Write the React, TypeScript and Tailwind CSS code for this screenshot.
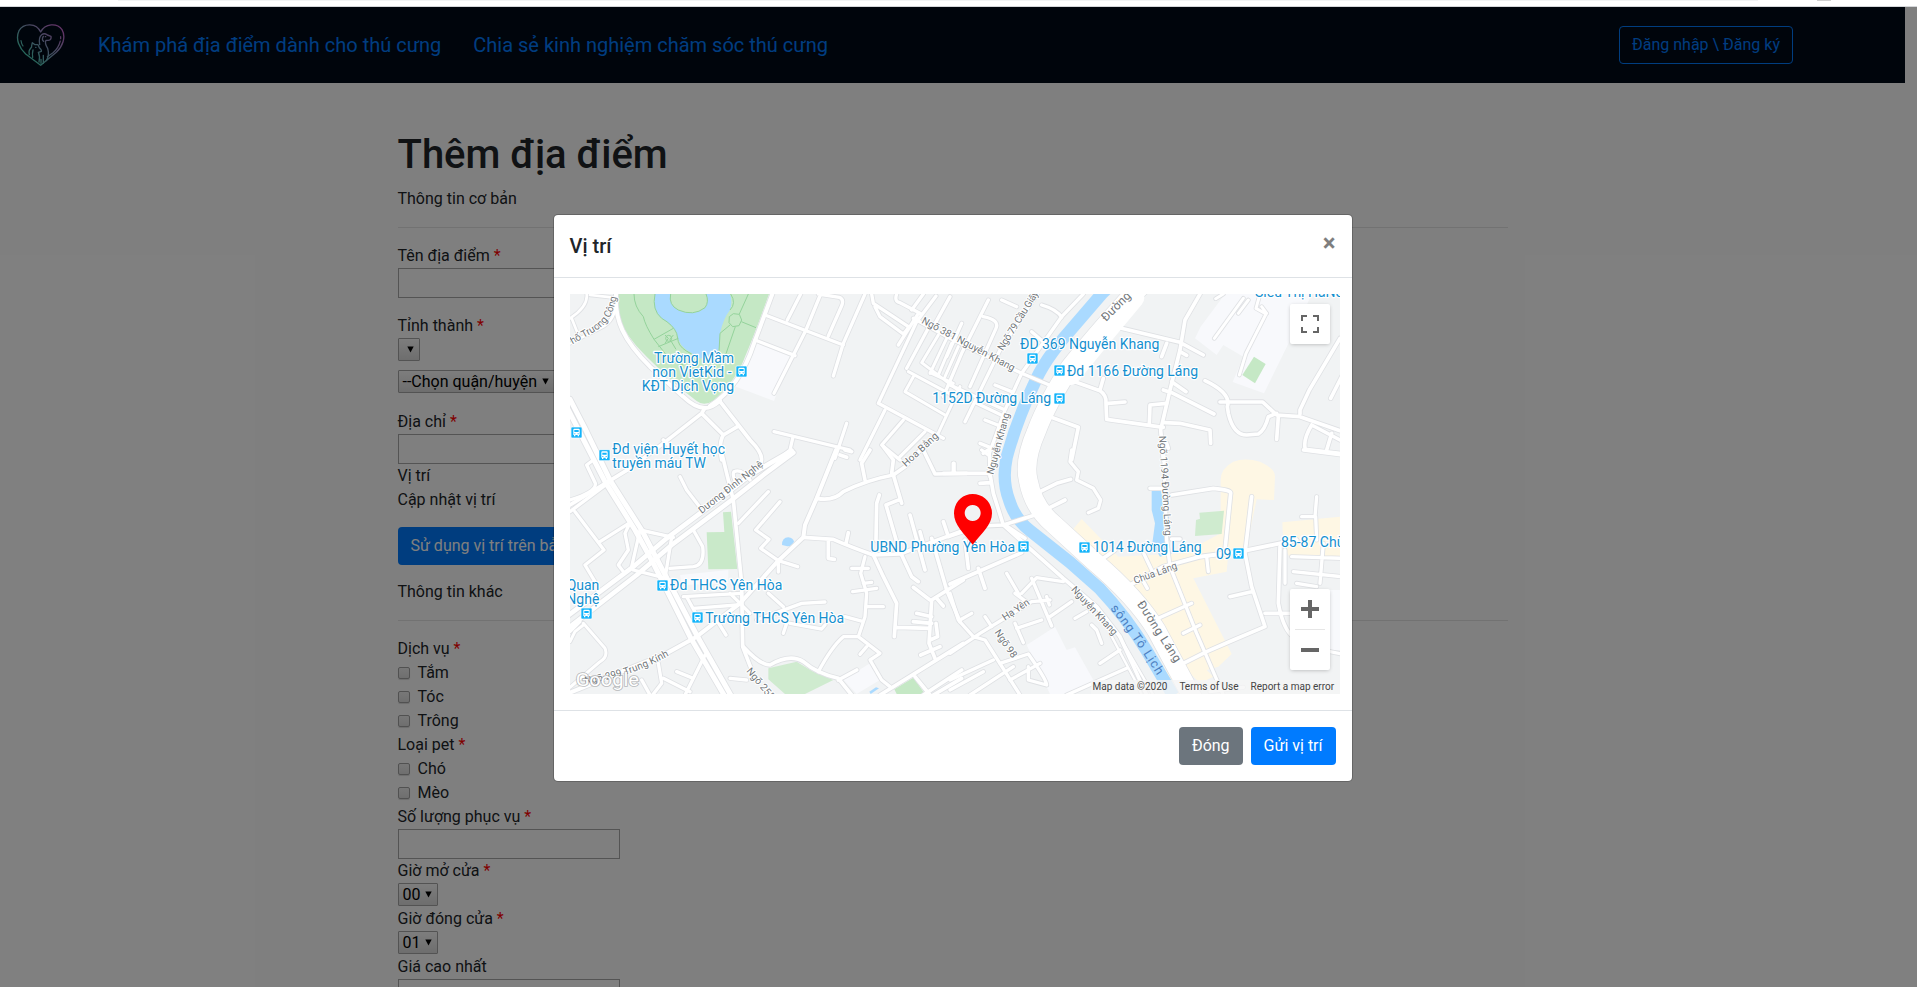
import React from "react";

type Tile = { x: number; y: number };
const NW: Tile = { x: -60, y: -252 };
const NE: Tile = { x: 1140, y: -252 };
const SW: Tile = { x: -60, y: 468 };
const SE: Tile = { x: 1140, y: 468 };

const at = (t: Tile) => `translate(${t.x} ${t.y})`;

const AREAS: { tile: Tile; fill: string; d: string }[] = [
  { tile: NW, fill: "#f8f9fc", d: "M610 395 L722 440 L672 573 L545 525Z" },
  { tile: NW, fill: "#c5e8c5", d: "M205 252 L657 252 Q615 370 585 440 Q560 510 490 572 Q462 590 440 573 Q370 520 290 440 Q225 380 202 310Z" },
  { tile: NW, fill: "#aadaff", d: "M315 252 Q305 300 335 325 Q370 345 380 370 Q385 410 425 430 L445 445 L500 445 Q512 400 510 370 Q520 325 540 300 Q548 275 540 252Z" },
  { tile: NW, fill: "#c5e8c5", d: "M362 252 Q355 285 385 300 Q430 320 465 293 Q478 275 468 252Z" },
  { tile: NE, fill: "#f8f9fc", d: "M825 252 L1085 252 L1050 330 L942 550 L848 516 L880 440 L820 405 L800 435 L735 385 L752 350Z" },
  { tile: NE, fill: "#c5e8c5", d: "M912 440 L947 462 L915 520 L877 495Z" },
  { tile: SW, fill: "#c9e9c9", d: "M519 187 L543 185 L562 357 L475 358 L470 247 L523 246Z" },
  { tile: SW, fill: "#f8f9fc", d: "M390 375 L535 360 L535 400 L395 405Z" },
  { tile: SW, fill: "#f8f9fc", d: "M880 690 L960 640 L990 690 L920 732Z" },
  { tile: SW, fill: "#cfebcf", d: "M655 655 L740 635 L790 665 L850 690 L765 732 L705 732 L655 688Z" },
  { tile: SW, fill: "#c5e8c5", d: "M1033 718 L1090 683 L1125 732 L1040 732Z" },
  { tile: SW, fill: "#aadaff", d: "M696 285 Q696 262 715 262 Q730 264 732 275 Q725 290 712 289Z" },
  { tile: SW, fill: "#aadaff", d: "M958 725 L978 712 L987 715 L962 732Z" },
  { tile: SE, fill: "#fef7e4", d: "M812 90 Q812 55 850 35 Q885 22 930 35 Q975 55 975 80 L972 150 L920 148 L890 290 L835 310 L830 365 L730 385 L845 612 L805 650 L770 660 L790 680 L750 700 L690 640 L620 520 L540 420 L370 237 L395 207 L505 320 L700 310 L812 250Z" },
  { tile: SE, fill: "#fef7e4", d: "M997 217 L1170 200 L1170 330 L1020 325 L1000 285Z" },
  { tile: SE, fill: "#fef7e4", d: "M325 285 L480 430 L560 540 L700 732 L660 732 L470 450Z" },
  { tile: SE, fill: "#aadaff", d: "M605 120 L633 118 L640 170 L657 200 L650 285 L665 310 L630 320 L607 280 L615 220 L605 180Z" },
  { tile: SE, fill: "#cfebcf", d: "M748 188 L822 182 L815 252 L735 258 L738 210 L750 206Z" },
  { tile: SE, fill: "#f8f9fc", d: "M230 585 L315 530 L350 600 L375 592 L430 690 L370 732 L300 732Z" },
  { tile: SE, fill: "#f8f9fc", d: "M1120 420 L1170 420 L1170 600 L1120 600Z" },
];

const PARK_PATHS =
  "M252 252 Q252 290 280 320 Q285 345 312 388 L345 430 Q370 460 400 465 M312 388 L370 355 M325 410 L385 385 M345 375 L355 385 L345 400 M370 375 L360 388 L378 418 M355 385 m-8 0 a9 9 0 1 0 18 0 a9 9 0 1 0 -18 0 M315 252 Q305 300 335 325 Q370 345 380 370 L385 395 Q390 415 425 432 M362 252 Q355 285 385 300 Q430 320 465 293 Q478 275 468 252 M542 252 Q560 280 540 300 M595 252 L568 312 M538 320 L550 311 L568 313 L575 330 L567 347 L548 350 L537 338Z M574 335 L618 353 M540 345 L510 370 L507 425 M556 350 L525 440";

const ROADS: { tile: Tile; w?: number; d: string }[] = [
  { tile: NW, w: 8, d: "M60 325 Q115 290 110 252 M65 325 L85 375 M120 255 L185 262 M60 400 L150 355 Q205 330 198 252" },
  { tile: NW, w: 12, d: "M198 252 C193 330 220 390 300 470 L400 560 Q435 594 465 594 Q485 594 510 572 M480 588 Q570 530 612 400 L667 252" },
  { tile: NW, w: 11, d: "M465 594 L455 610 L340 700 L240 775 L60 885 M455 610 L520 675 L562 650 M520 675 Q505 700 515 750 M508 572 L600 690 Q645 735 632 760 M340 690 L365 715" },
  { tile: NW, w: 10, d: "M645 315 L880 405 M752 252 L712 330 M812 252 L768 360 L672 550 M805 252 L868 262 Q882 268 876 285 L835 378 M945 252 L880 400 L850 498 M615 390 L735 437" },
  { tile: NW, w: 10, d: "M965 252 L970 280 L1075 350 M975 290 L990 320 L1060 372 M1040 252 Q1032 275 1050 278 L1110 310 M1078 350 L1060 372 M1120 252 L1085 300 M1158 258 L1100 335 L985 580 L1180 685 M1200 260 L1150 350 M1140 345 L1070 475 M1105 310 L1045 405" },
  { tile: NW, w: 9, d: "M1165 375 L1115 458 L1230 545 M1190 385 L1140 490 M1205 400 L1165 495 M1225 410 L1185 500 M1075 485 L1215 560 M1090 500 L1065 545 L1185 615 M1230 530 L1160 680 M1140 488 L1210 520" },
  { tile: NW, w: 10, d: "M1005 600 L930 750 M672 665 L900 720 M890 640 L855 745 M728 685 L720 720 L690 745 M1060 630 L995 705 L1050 750 M1125 665 L1050 740" },

  { tile: NE, w: 10, d: "M400 252 L335 320 L215 490 L165 600 L118 730 L120 800 M-110 325 L0 385 L215 490 L310 530 M155 270 L200 290 M275 285 Q320 298 335 322 M245 365 L280 395 M100 320 Q150 330 138 355 L60 530 M115 270 L35 430 L-20 560 M262 252 L150 420 L45 635 M35 340 L-10 440 M0 525 L165 600 M80 580 L165 620 M135 525 L185 545 M105 630 L155 650 M90 700 L120 712 M95 720 L115 735" },
  { tile: NE, w: 11, d: "M495 350 L690 397 L760 435 M750 252 L705 330 L690 420 L660 540 L632 660 L640 750 M650 400 L635 440 M690 425 L710 436 M665 515 L708 545 M640 540 L665 548 L792 612" },
  { tile: NE, w: 11, d: "M460 505 L450 540 M345 505 L450 542 Q470 555 468 580 L470 628 L640 652 M475 580 L525 576 M598 640 L600 585 L650 580 M645 638 L690 640 L780 660 L782 700 M300 620 L385 652 L365 750 M650 700 L655 715" },
  { tile: NE, w: 9, d: "M880 265 L793 385 M820 252 L797 266 M895 270 L865 310 M930 252 L918 295 L948 312 L888 430 L868 495 M935 290 L950 310" },
  { tile: NE, w: 11, d: "M765 512 Q845 550 832 590 L835 610 Q850 675 890 675 L925 672 Q945 660 955 620 L980 610 M810 576 L938 576 L980 615 L1050 620 L1170 662 M985 620 L980 688 M1050 612 L1050 600 L1078 540 L1170 385 M1175 500 L1142 565 M1085 645 Q1058 690 1066 718 L1170 730 M1085 645 L1170 690 M1145 670 L1130 720" },

  { tile: SW, w: 15, d: "M60 -152 L105 -65 L180 90 L275 240 L330 345 L440 555 L545 740 M50 -130 L165 95 L255 240 L310 340 L420 560 L525 740" },
  { tile: SW, w: 14, d: "M50 500 L250 350 L350 265 L530 130 L600 75 L660 40 L725 2 M50 538 L260 375 L365 285 L545 150 L640 75 L730 8" },
  { tile: SW, w: 10, d: "M60 150 Q140 125 136 100 L110 45 L130 30 M60 185 L180 95 M75 185 L162 300 L105 345 L135 395 M150 275 L240 218 M240 218 L225 250 L235 300 L205 345 L218 362 M270 240 L370 262 M365 262 L345 385 M250 360 L350 385 M270 240 L245 350" },
  { tile: SW, w: 10, d: "M430 240 L458 290 Q465 345 430 350 L360 355 M390 80 L410 120 L450 172 M600 90 Q575 55 552 65 Q545 75 560 100" },
  { tile: SW, w: 11, d: "M512 -5 L530 70 L550 150 L575 400 L578 590 L605 660" },
  { tile: SW, w: 10, d: "M655 125 L565 220 M690 155 L617 240 L657 268 L632 295 L685 332 L743 350 M685 335 L685 366 M655 430 L700 470 M620 510 L755 460 L825 456 M720 520 L815 537 L825 525 M710 520 L700 550" },
  { tile: SW, w: 12, d: "M858 0 L800 145 L765 225 L760 262 L685 332 L570 460 L440 560 L350 610 L60 728" },
  { tile: SW, w: 11, d: "M760 262 L850 268 Q900 290 970 315 L1050 312 L1230 245 M895 248 L888 280 M835 275 L835 325 L853 328 M800 145 Q850 155 880 125 Q950 90 1030 75 L1065 50 L1130 -20 M945 90 L935 40 L960 0 M1000 -10 L1030 30 L1025 70" },
  { tile: SW, w: 11, d: "M1120 0 L1155 72 L1250 70 M1212 40 V70 M1030 75 L1055 160 M1050 148 L1008 165 L1040 275 L1048 310 M988 135 L980 160 L978 270 M1080 195 L1125 360 M1110 245 L1125 300 M1180 215 L1195 260 M1055 315 L1085 380 L1105 395 M1145 265 L1190 420 L1230 515 M870 15 L890 22 M885 0 L905 5" },
  { tile: SW, w: 11, d: "M970 315 L1000 380 L1040 460 L1033 560 M1040 532 L1140 535 M1240 390 L1145 450 L1137 580 L1155 625 M1090 412 L1140 450 M1100 490 L1145 500 M1090 515 L1145 520 M1158 520 L1163 560 L1140 570 M1112 615 L1170 590 M1160 445 L1180 468" },
  { tile: SW, w: 10, d: "M945 320 L932 370 L950 430 L945 500 L925 560 M905 355 L955 355 M908 425 L980 415 M940 400 L965 397 M950 470 L1000 470 M885 500 L940 515 M925 560 L880 560 Q845 590 805 665 M925 560 L990 610 L960 630 L995 690 L1020 710 M930 613 L950 590" },
  { tile: SW, w: 11, d: "M580 590 Q630 645 660 645 Q720 610 760 635 Q800 670 865 685 L905 735 M865 690 L920 660 M1240 580 L990 735 M1095 680 L1140 735 M1235 660 L1120 735 M1235 685 L1150 735" },
  { tile: SW, w: 10, d: "M400 440 L575 430 M430 475 L560 465 M410 440 L445 505 M500 510 L528 555 M540 430 L600 490 M465 615 L405 735 M340 685 L420 725 M380 665 L430 685 M325 640 L335 700 L310 732 M275 690 L300 735 M540 685 L590 690" },
  { tile: SW, w: 9, d: "M100 520 L165 595 Q175 620 150 635 L60 712 M60 575 L75 545 L100 525 M60 545 L90 515" },

  { tile: SE, w: 11, d: "M118 60 L130 130 L160 225 L340 385 L440 470 L510 560 L590 735 M225 265 L165 225 M100 10 L115 0 M90 100 L120 98" },
  { tile: SE, w: 7, d: "M480 550 L560 700 L575 735 M500 545 L610 735" },
  { tile: SE, w: 11, d: "M270 125 L320 100 L362 88 M345 150 L255 195 L160 225 L90 228 L0 258 M-20 70 L115 70 M10 40 V70 M0 402 L215 308 M45 270 L55 355 M85 355 L105 415" },
  { tile: SE, w: 10, d: "M170 370 L208 435 M215 430 L260 383 L340 395 M245 385 L305 528 M0 610 L90 550 L245 455 L300 450 M0 430 L25 510 L70 560 L105 570 L210 735 M195 430 L235 460 M65 490 L30 510 M105 500 L125 530 M195 520 L220 578 M200 535 L275 510 M300 500 L365 455 M290 440 L298 465" },
  { tile: SE, w: 10, d: "M150 640 L235 612 Q290 690 290 705 L235 690 L235 650 M60 735 L190 650 M0 690 L130 630 M0 720 L100 665 M180 690 L270 640 M350 735 L530 655 M450 640 L510 600 M455 580 L440 540 L425 525 M375 505 L410 485" },
  { tile: SE, w: 10, d: "M365 0 L360 35 L385 65 L380 90 L430 115 L452 150 L445 175 L415 188" },
  { tile: SE, w: 10, d: "M640 -30 L650 270 L660 350 L740 550 L820 735" },
  { tile: SE, w: 11, d: "M665 135 L790 115 Q845 120 842 130 L835 200 L825 300 M600 115 L650 115 M665 267 L690 267 M905 140 L885 310 L905 410 L945 530 L850 570 L770 605 L700 640 M840 440 L905 425 M945 490 L1020 490 M990 290 L985 460 Q1000 540 1030 560 M460 325 L495 300" },
  { tile: SE, w: 12, d: "M540 405 L640 350 L750 320 L880 303 L990 280 L1040 270" },
  { tile: SE, w: 10, d: "M770 320 L775 365 M582 312 L605 360 M575 385 L592 415 M625 505 L725 460 M700 550 L750 525 M1100 140 L1095 200 M1055 200 L1097 200 L1100 270 M1025 320 L1175 325 M1030 365 L1175 380 M1120 280 L1110 400 M1005 300 L1005 400 M1040 400 L1100 410 M1140 605 L1175 612 M1060 0 L1175 15 M780 725 L880 712" },
];

const STREETS: { tile: Tile; x: number; y: number; r: number; len?: number; size?: number; t: string }[] = [
  { tile: NW, x: 1113, y: 338, r: 28, len: 312, t: "Ngõ 381 Nguyễn Khang" },
  { tile: NE, x: 158, y: 424, r: -58, len: 205, t: "Ngõ 79 Cầu Giấy" },
  { tile: NE, x: 468, y: 336, r: -45, len: 108, size: 36, t: "Đường" },
  { tile: SW, x: 1068, y: 52, r: -43, len: 135, t: "Hoa Bằng" },
  { tile: SW, x: 455, y: 192, r: -38, len: 236, t: "Dương Đình Nghệ" },
  { tile: SW, x: 588, y: 664, r: 50, t: "Ngõ 255 Mạc" },
  { tile: SE, x: 130, y: 75, r: -75, len: 190, t: "Nguyễn Khang" },
  { tile: SE, x: 627, y: -42, r: 86.5, len: 300, t: "Ngõ 1194 Đường Láng" },
  { tile: SE, x: 555, y: 402, r: -20, len: 137, t: "Chùa Láng" },
  { tile: SE, x: 362, y: 420, r: 47, len: 188, t: "Nguyễn Khang" },
  { tile: SE, x: 560, y: 462, r: 57, len: 212, size: 36, t: "Đường Láng" },
  { tile: SE, x: 165, y: 513, r: -34, len: 92, t: "Hạ Yên" },
  { tile: SE, x: 133, y: 547, r: 56, len: 95, t: "Ngõ 98" },
];

const PLACES: { tile: Tile; x: number; y: number; len?: number; end?: boolean; t: string }[] = [
  { tile: NW, x: 552, y: 460, len: 240, end: true, t: "Trường Mầm" },
  { tile: NW, x: 545, y: 501, len: 238, end: true, t: "non VietKid -" },
  { tile: NW, x: 552, y: 543, len: 277, end: true, t: "KĐT Dịch Vọng" },
  { tile: NW, x: 187, y: 732, len: 338, t: "Đd viện Huyết học" },
  { tile: NW, x: 187, y: 774, len: 281, t: "truyền máu TW" },
  { tile: NE, x: 210, y: 417, len: 418, t: "ĐD 369 Nguyễn Khang" },
  { tile: NE, x: 351, y: 499, len: 393, t: "Đd 1166 Đường Láng" },
  { tile: NE, x: 303, y: 580, len: 356, end: true, t: "1152D Đường Láng" },
  { tile: NE, x: 915, y: 262, t: "Siêu Thị HaNoi" },
  { tile: SW, x: 360, y: 420, len: 337, t: "Đd THCS Yên Hòa" },
  { tile: SW, x: 466, y: 519, len: 416, t: "Trường THCS Yên Hòa" },
  { tile: SW, x: 148, y: 420, end: true, t: "Quan" },
  { tile: SW, x: 148, y: 462, end: true, t: "Nghệ" },
  { tile: SW, x: 961, y: 306, len: 434, t: "UBND Phường Yên Hòa" },
  { tile: SE, x: 428, y: 306, len: 327, t: "1014 Đường Láng" },
  { tile: SE, x: 798, y: 326, len: 46, t: "09" },
  { tile: SE, x: 993, y: 291, t: "85-87 Chùa Láng" },
];

const STOPS: { tile: Tile; x: number; y: number }[] = [
  { tile: NW, x: 558, y: 468 },
  { tile: NW, x: 63, y: 651 },
  { tile: NW, x: 147, y: 719 },
  { tile: NE, x: 231, y: 429 },
  { tile: NE, x: 312, y: 465 },
  { tile: NE, x: 312, y: 549 },
  { tile: SW, x: 321, y: 390 },
  { tile: SW, x: 426, y: 486 },
  { tile: SW, x: 93, y: 474 },
  { tile: SE, x: 204, y: 273 },
  { tile: SE, x: 387, y: 276 },
  { tile: SE, x: 849, y: 294 },
];

function BusStop({ x, y }: { x: number; y: number }) {
  return (
    <g transform={`translate(${x} ${y})`}>
      <rect width="33" height="33" rx="3" fill="#14b4fa" stroke="#fff" strokeWidth="2" />
      <path d="M7 8 Q7 5 10 5 H23 Q26 5 26 8 V24 H24 V28 H20 V24 H13 V28 H9 V24 H7Z" fill="#fff" />
      <path d="M10 9 H23 V15 H10Z M10 19 H13 V22 H10Z M20 19 H23 V22 H20Z" fill="#14b4fa" />
    </g>
  );
}

const RIVER =
  "M1615 -20 L1595 0 L1500 110 Q1420 200 1390 275 Q1340 380 1310 490 Q1295 560 1318 620 Q1335 675 1380 710 L1500 805 L1590 885 Q1670 970 1730 1070 L1810 1205";
const AVENUE =
  "M1730 -40 L1690 0 Q1580 120 1500 220 Q1430 330 1400 410 Q1360 500 1375 560 Q1390 640 1450 690 L1570 800 Q1700 910 1760 1010 L1870 1215";

function MapCanvas() {
  return (
    <svg className="block h-full w-full font-[Roboto,sans-serif]" viewBox="0 0 2310 1200">
      <rect width="2310" height="1200" fill="#f1f3f4" />
      {AREAS.map((a, i) => (
        <path key={i} d={a.d} fill={a.fill} transform={at(a.tile)} />
      ))}
      <path d={PARK_PATHS} transform={at(NW)} fill="none" stroke="#94d39b" strokeWidth="3" />
      <path d={RIVER} fill="none" stroke="#aadaff" strokeWidth="37" />
      <g fill="none" strokeLinecap="round" strokeLinejoin="round" stroke="#dfe1e4">
        {ROADS.map((r, i) => (
          <path key={i} d={r.d} transform={at(r.tile)} strokeWidth={(r.w ?? 10) + 5} />
        ))}
        <path d={AVENUE} strokeWidth="60" />
      </g>
      <g fill="none" strokeLinecap="round" strokeLinejoin="round" stroke="#fff">
        {ROADS.map((r, i) => (
          <path key={i} d={r.d} transform={at(r.tile)} strokeWidth={r.w ?? 10} />
        ))}
        <path d={AVENUE} strokeWidth="56" />
        <path d="M1690 10 L1590 130 L1500 240" strokeWidth="66" />
      </g>
      <g fill="#71767a" stroke="#fff" strokeWidth="6" strokeLinejoin="round" paintOrder="stroke" fontSize="30">
        <path id="truongCong" d="M-8 160 L75 112 Q134 80 141 -8" fill="none" stroke="none" />
        <text>
          <textPath href="#truongCong" textLength="222">Phố Trương Công</textPath>
        </text>
        <path id="trungKinh" d="M45 1170 Q185 1150 306 1080" fill="none" stroke="none" />
        <text>
          <textPath href="#trungKinh" textLength="268">Ngõ 299 Trung Kính</textPath>
        </text>
        {STREETS.map((s, i) => (
          <g key={i} transform={at(s.tile)}>
            <text transform={`translate(${s.x} ${s.y}) rotate(${s.r})`} fontSize={s.size ?? 30} textLength={s.len}>
              {s.t}
            </text>
          </g>
        ))}
      </g>
      <path id="toLich" d="M1620 944 Q1690 1030 1765 1150" fill="none" />
      <text fill="#4c80c2" fontSize="38">
        <textPath href="#toLich" textLength="246">sông Tô Lịch</textPath>
      </text>
      <g fill="#1590cf" stroke="#fff" strokeWidth="7" strokeLinejoin="round" paintOrder="stroke" fontSize="42">
        {PLACES.map((p, i) => (
          <text key={i} transform={at(p.tile)} x={p.x} y={p.y} textLength={p.len} textAnchor={p.end ? "end" : "start"}>
            {p.t}
          </text>
        ))}
      </g>
      {STOPS.map((s, i) => (
        <g key={i} transform={at(s.tile)}>
          <BusStop x={s.x} y={s.y} />
        </g>
      ))}
      <path
        transform={at(SE)}
        fill="#f00"
        fillRule="evenodd"
        d="M68 132 C100 132 126 157 126 190 C126 225 95 250 68 284 C41 250 12 225 12 190 C12 157 37 132 68 132Z M68 165 a24 24 0 1 0 0.1 0Z"
      />
      <text x="17" y="1176" fontSize="56" fill="#fff" stroke="#8d9093" strokeOpacity="0.6" strokeWidth="5" paintOrder="stroke" textLength="190" lengthAdjust="spacingAndGlyphs">
        Google
      </text>
    </svg>
  );
}

function MapView() {
  return (
    <div className="relative h-[400px] w-[770px] overflow-hidden">
      <MapCanvas />
      <div className="absolute right-0 bottom-0 flex h-[14px] w-[249px] items-center gap-3 bg-[#f5f5f5]/80 pl-[2px] text-[10px] leading-[14px] whitespace-nowrap text-[#444]">
        <span>Map data ©2020</span>
        <span>Terms of Use</span>
        <span>Report a map error</span>
      </div>
      <div className="absolute top-[10px] right-[10px] flex h-10 w-10 items-center justify-center rounded-[2px] bg-white shadow-[0_1px_4px_-1px_rgba(0,0,0,0.3)]">
        <svg width="18" height="18" viewBox="0 0 18 18" fill="#666">
          <path d="M0 0v6h2V2h4V0H0zm16 0h-4v2h4v4h2V0h-2zm0 16h-4v2h6v-6h-2v4zM2 12H0v6h6v-2H2v-4z" />
        </svg>
      </div>
      <div className="absolute top-[295px] right-[10px] flex h-[81px] w-10 flex-col items-center rounded-[2px] bg-white shadow-[0_1px_4px_-1px_rgba(0,0,0,0.3)]">
        <div className="flex h-10 items-center">
          <svg width="18" height="18" viewBox="0 0 18 18" fill="#666">
            <path d="M18 7h-7V0H7v7H0v4h7v7h4v-7h7z" />
          </svg>
        </div>
        <div className="h-px w-[30px] bg-[#e6e6e6]" />
        <div className="flex h-10 items-center">
          <svg width="18" height="18" viewBox="0 0 18 18" fill="#666">
            <path d="M0 7h18v4H0z" />
          </svg>
        </div>
      </div>
    </div>
  );
}

function Logo() {
  return (
    <svg width="50" height="44" viewBox="49 69 150 132" fill="none" stroke="url(#brand)" strokeWidth="4" strokeLinecap="round" strokeLinejoin="round">
      <defs>
        <linearGradient id="brand" x1="70" y1="190" x2="180" y2="80" gradientUnits="userSpaceOnUse">
          <stop offset="0.1" stopColor="#45d6b4" />
          <stop offset="0.5" stopColor="#7f9fbe" />
          <stop offset="1" stopColor="#c868d0" />
        </linearGradient>
      </defs>
      <path d="M123 96 C110 68 72 68 58 92 C46 118 60 145 78 162 L123 196 L170 157 C188 140 200 112 187 89 C172 68 136 70 123 96Z" />
      <path d="M64 122 Q66 134 70 138 M183 110 V116 M182 123 Q176 146 160 158 L143 170" strokeWidth="3.5" />
      <path d="M120 134 Q116 112 126 104 Q134 98 143 105 L154 109 Q156 119 146 121 L139 121 Q134 129 144 145 Q150 165 140 182 M131 109 Q125 119 132 124 M137 110 h1" />
      <path d="M89 164 Q86 152 93 145 Q97 141 96 137 L98 128 L106 134 L115 134 L119 143 Q127 150 125 154 L116 157 Q122 170 118 186 M108 142 h1 M131 190 V166 M124 190 V178 M100 150 Q97 160 99 172" />
    </svg>
  );
}

function Navbar() {
  return (
    <nav className="flex h-[76px] w-[1905px] items-center bg-[#000a18] pr-28 pl-4 text-[#007bff]">
      <Logo />
      <div className="ml-8 flex flex-1 gap-8 text-[20px] leading-[30px]">
        <a>Khám phá địa điểm dành cho thú cưng</a>
        <a>Chia sẻ kinh nghiệm chăm sóc thú cưng</a>
      </div>
      <button className="h-[38px] rounded border border-[#007bff] px-3 text-base leading-6">Đăng nhập \ Đăng ký</button>
    </nav>
  );
}

function Label({ children, required }: { children: React.ReactNode; required?: boolean }) {
  return (
    <div className="h-6 leading-6">
      {children}
      {required && <span className="text-[#f00]"> *</span>}
    </div>
  );
}

function TextBox() {
  return <div className="h-[30px] w-[222px] border border-[#a9a9a9] bg-white" />;
}

function Select({ value }: { value?: string }) {
  return (
    <div className="flex h-6">
      <div className="flex h-[23px] items-center rounded-[1px] border border-[#a6a6a6] bg-linear-to-b from-[#fbfbfb] to-[#dcdcdc] pr-[5px] pl-1 text-black">
        <span className="leading-5">{value}</span>
        <svg className="ml-[5px]" width="7" height="7" viewBox="0 0 7 7">
          <path d="M0.3 0.5 H6.7 L3.5 6.5Z" fill="#000" />
        </svg>
      </div>
    </div>
  );
}

function Check({ children }: { children: React.ReactNode }) {
  return (
    <div className="flex h-6 items-center gap-2 leading-6">
      <span className="-mt-px h-3 w-3 rounded-[2px] border border-[#a2a2a2] bg-linear-to-b from-[#f0f0f0] to-[#dedede] shadow-[0_1px_1px_rgba(0,0,0,0.15)]" />
      {children}
    </div>
  );
}

function PlaceForm() {
  return (
    <main className="mx-auto w-[1110px] pt-12 text-base text-[#212529]">
      <h1 className="mb-2 text-[40px] leading-[48px] font-medium">Thêm địa điểm</h1>
      <Label>Thông tin cơ bản</Label>
      <hr className="my-4 border-black/10" />
      <Label required>Tên địa điểm</Label>
      <TextBox />
      <div className="mt-4">
        <Label required>Tỉnh thành</Label>
        <div className="flex h-6">
          <div className="flex h-[23px] w-[22px] items-center justify-end rounded-[1px] border border-[#a6a6a6] bg-linear-to-b from-[#fbfbfb] to-[#dcdcdc] pr-[5px]">
            <svg width="7" height="7" viewBox="0 0 7 7">
              <path d="M0.3 0.5 H6.7 L3.5 6.5Z" fill="#000" />
            </svg>
          </div>
        </div>
      </div>
      <div className="mt-2">
        <Select value="--Chọn quận/huyện" />
      </div>
      <div className="mt-4">
        <Label required>Địa chỉ</Label>
        <TextBox />
        <Label>Vị trí</Label>
        <Label>Cập nhật vị trí</Label>
      </div>
      <button className="mt-[15px] mb-[15px] block h-[38px] rounded bg-[#007bff] px-[13px] leading-6 text-white">Sử dụng vị trí trên bản đồ</button>
      <Label>Thông tin khác</Label>
      <hr className="my-4 border-black/10" />
      <Label required>Dịch vụ</Label>
      <Check>Tắm</Check>
      <Check>Tóc</Check>
      <Check>Trông</Check>
      <Label required>Loại pet</Label>
      <Check>Chó</Check>
      <Check>Mèo</Check>
      <Label required>Số lượng phục vụ</Label>
      <TextBox />
      <Label required>Giờ mở cửa</Label>
      <Select value="00" />
      <Label required>Giờ đóng cửa</Label>
      <Select value="01" />
      <Label>Giá cao nhất</Label>
      <TextBox />
    </main>
  );
}

function LocationModal() {
  return (
    <div className="w-[800px] rounded-[5px] border border-black/20 bg-white bg-clip-padding text-[#212529]">
      <header className="flex h-[63px] items-start justify-between border-b border-[#dee2e6] p-4">
        <h5 className="text-[20px] leading-[30px] font-medium">Vị trí</h5>
        <button className="text-[24px] leading-6 font-bold text-black opacity-50">×</button>
      </header>
      <div className="h-[432px] py-4 pl-4">
        <MapView />
      </div>
      <footer className="flex h-[71px] justify-end gap-2 border-t border-[#dee2e6] p-4 text-base text-white">
        <button className="h-[38px] rounded bg-[#6c757d] px-[13px]">Đóng</button>
        <button className="h-[38px] rounded bg-[#007bff] px-[13px]">Gửi vị trí</button>
      </footer>
    </div>
  );
}

export default function App() {
  return (
    <div className="relative h-[987px] w-full overflow-hidden bg-white font-[Roboto,'Noto_Sans',sans-serif]">
      <div className="flex h-[7px] justify-between border-b border-[#d5d7da] bg-white pr-[86px] pl-[118px]">
        <div className="h-px w-[1640px] bg-[#f1f3f4]" />
        <div className="h-px w-[14px] bg-[#cfcfcf]" />
      </div>
      <Navbar />
      <div className="w-[1905px]">
        <PlaceForm />
      </div>
      <div className="absolute inset-x-0 top-[7px] bottom-0 bg-black/50" />
      <div className="absolute top-[214px] left-0 flex w-[1905px] justify-center">
        <LocationModal />
      </div>
    </div>
  );
}
